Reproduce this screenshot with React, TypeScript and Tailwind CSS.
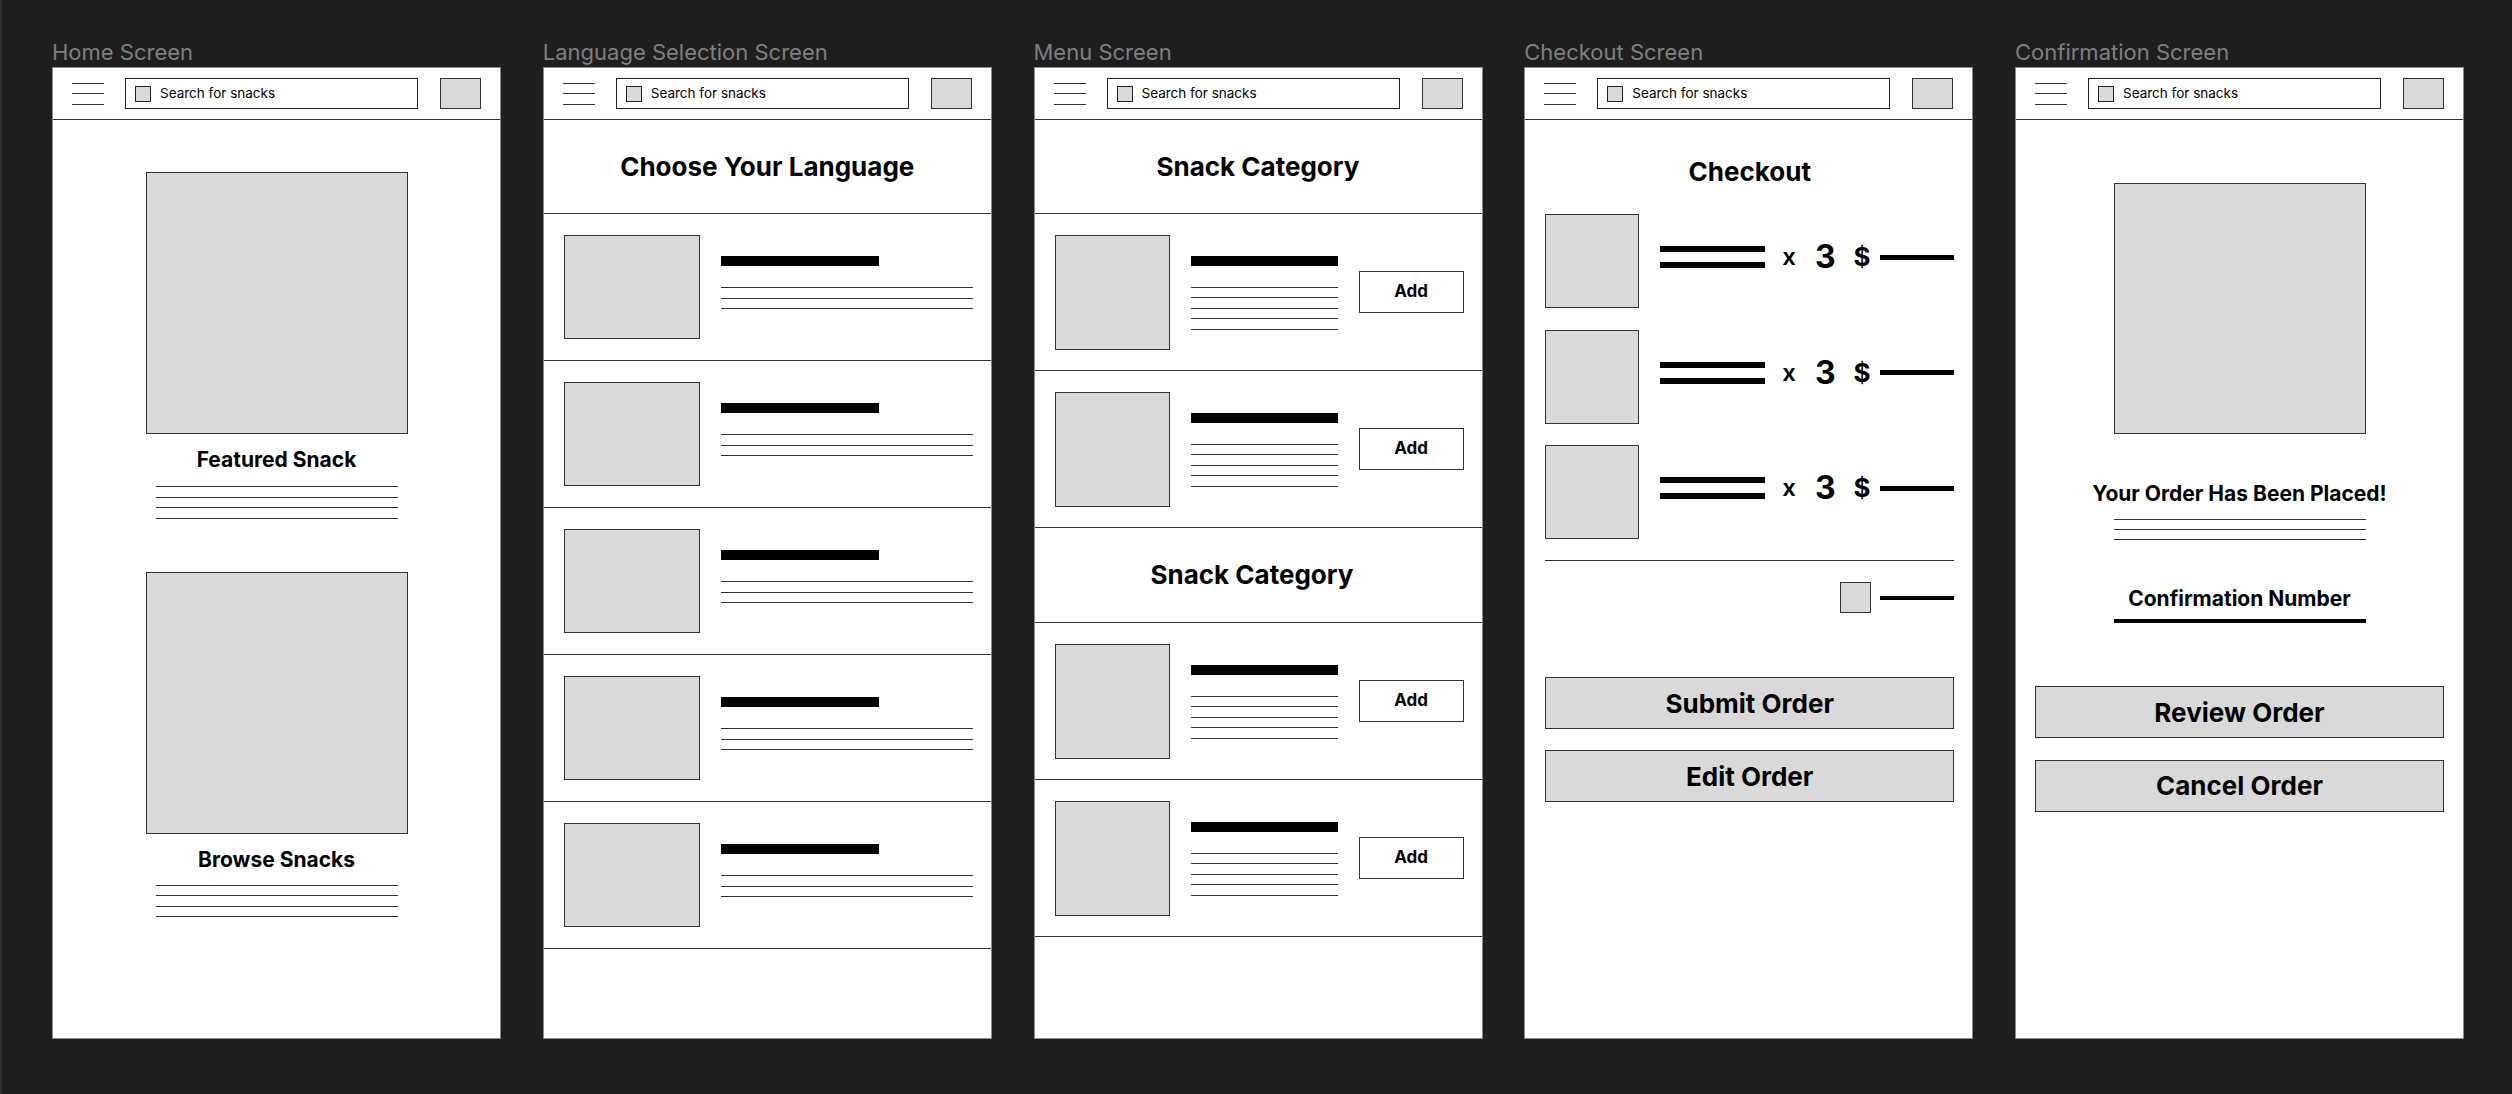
import React from 'react';

const Img: React.FC<{ className?: string }> = ({ className = '' }) => (
  <div className={`bg-[#d9d9d9] border border-[#333] shrink-0 ${className}`} />
);

const Lines: React.FC<{ count: number; className?: string; gap?: string }> = ({ count, className = '', gap = 'gap-[9.5px]' }) => (
  <div className={`flex flex-col ${gap} ${className}`}>
    {Array.from({ length: count }).map((_, i) => (
      <div key={i} className="h-px bg-[#333]" />
    ))}
  </div>
);

const Header: React.FC = () => (
  <div className="h-[52px] shrink-0 border-b border-[#333] flex items-center px-[19px]">
    <div className="w-[32px] flex flex-col gap-[9.5px]">
      <div className="h-px bg-[#333]" />
      <div className="h-px bg-[#333]" />
      <div className="h-px bg-[#333]" />
    </div>
    <div className="ml-[21px] w-[293px] h-[31px] border border-[#222] flex items-center pl-[9px]">
      <div className="w-[16px] h-[16px] bg-[#d9d9d9] border border-[#222]" />
      <span className="ml-[9px] text-[13.5px] leading-none text-black">Search for snacks</span>
    </div>
    <div className="ml-[22px] w-[41px] h-[31px] bg-[#d9d9d9] border border-[#333]" />
  </div>
);

const Screen: React.FC<{ label: string; children: React.ReactNode }> = ({ label, children }) => (
  <div className="flex flex-col shrink-0">
    <div className="h-[26px] mb-[2px] text-[22px] leading-[26px] text-[#808080] whitespace-nowrap">{label}</div>
    <div className="w-[449px] h-[972px] bg-white border border-[#8a8a8a] flex flex-col overflow-hidden">
      <Header />
      {children}
    </div>
  </div>
);

const HomeScreen = () => (
  <Screen label="Home Screen">
    <div className="flex flex-col items-center pt-[52px]">
      <Img className="w-[262px] h-[262px]" />
      <div className="mt-[13px] text-[21px] leading-[26px] font-bold text-black">Featured Snack</div>
      <Lines count={4} className="mt-[13px] w-[242px]" />
      <Img className="mt-[53px] w-[262px] h-[262px]" />
      <div className="mt-[13px] text-[21px] leading-[26px] font-bold text-black">Browse Snacks</div>
      <Lines count={4} className="mt-[12px] w-[242px]" />
    </div>
  </Screen>
);

const LanguageRow = () => (
  <div className="h-[147px] shrink-0 border-b border-[#333] flex items-center pl-[20px] pr-[18px]">
    <Img className="w-[136px] h-[104px]" />
    <div className="ml-[21px] flex-1 h-[104px] pt-[21px] flex flex-col">
      <div className="w-[158px] h-[10px] bg-black" />
      <Lines count={3} className="mt-[21px] w-full" />
    </div>
  </div>
);

const LanguageScreen = () => (
  <Screen label="Language Selection Screen">
    <div className="h-[94px] shrink-0 border-b border-[#333] flex items-center justify-center">
      <h2 className="text-[26px] leading-[32px] font-bold text-black">Choose Your Language</h2>
    </div>
    {[0, 1, 2, 3, 4].map((i) => (
      <LanguageRow key={i} />
    ))}
  </Screen>
);

const MenuRow = () => (
  <div className="h-[157px] shrink-0 border-b border-[#333] flex items-center pl-[20px]">
    <Img className="w-[115px] h-[115px]" />
    <div className="ml-[21px] w-[147px] h-[115px] pt-[21px] flex flex-col">
      <div className="w-full h-[10px] bg-black" />
      <Lines count={5} className="mt-[21px] w-full" />
    </div>
    <button className="ml-[21px] w-[105px] h-[42px] border border-[#333] bg-white text-[17px] font-bold text-black">
      Add
    </button>
  </div>
);

const MenuScreen = () => (
  <Screen label="Menu Screen">
    <div className="h-[94px] shrink-0 border-b border-[#333] flex items-center justify-center">
      <h2 className="text-[26px] leading-[32px] font-bold text-black">Snack Category</h2>
    </div>
    <MenuRow />
    <MenuRow />
    <div className="h-[95px] shrink-0 border-b border-[#333] flex items-center justify-center pr-[12px]">
      <h2 className="text-[26px] leading-[32px] font-bold text-black">Snack Category</h2>
    </div>
    <MenuRow />
    <MenuRow />
  </Screen>
);

const CheckoutItem = () => (
  <div className="flex items-center">
    <Img className="w-[94px] h-[94px]" />
    <div className="ml-[21px] mb-[8px] flex items-center">
      <div className="w-[105px] flex flex-col gap-[10px]">
        <div className="h-[6px] bg-black" />
        <div className="h-[6px] bg-black" />
      </div>
      <span className="ml-[17px] text-[24px] leading-none font-semibold text-black">x</span>
      <span className="ml-[19px] text-[32px] leading-none font-bold text-black">3</span>
      <span className="ml-[18px] text-[26px] leading-none font-bold text-black">$</span>
      <div className="ml-[9px] w-[74px] h-[5px] bg-black" />
    </div>
  </div>
);

const OrderButton: React.FC<{ label: string; className?: string }> = ({ label, className = '' }) => (
  <button className={`w-[409px] h-[52px] bg-[#d9d9d9] border border-[#333] text-[26px] font-bold text-black ${className}`}>
    {label}
  </button>
);

const CheckoutScreen = () => (
  <Screen label="Checkout Screen">
    <div className="flex flex-col pl-[20px] pr-[18px] pt-[36px]">
      <h2 className="text-center text-[26px] leading-[32px] font-bold text-black">Checkout</h2>
      <div className="mt-[26px] flex flex-col gap-[21.5px]">
        <CheckoutItem />
        <CheckoutItem />
        <CheckoutItem />
      </div>
      <div className="mt-[21px] h-px bg-[#333]" />
      <div className="mt-[21px] flex items-center justify-end">
        <Img className="w-[31px] h-[31px]" />
        <div className="ml-[9px] w-[74px] h-[4px] bg-black" />
      </div>
      <OrderButton label="Submit Order" className="mt-[64px]" />
      <OrderButton label="Edit Order" className="mt-[21px]" />
    </div>
  </Screen>
);

const ConfirmationScreen = () => (
  <Screen label="Confirmation Screen">
    <div className="flex flex-col items-center pt-[63px]">
      <Img className="w-[252px] h-[251px]" />
      <div className="mt-[47px] text-[21px] leading-[26px] font-bold text-black">Your Order Has Been Placed!</div>
      <Lines count={3} gap="gap-[9px]" className="mt-[12px] w-[252px]" />
      <div className="mt-[46px] text-[21px] leading-[26px] font-bold text-black">Confirmation Number</div>
      <div className="mt-[7px] w-[252px] h-[4px] bg-black" />
      <OrderButton label="Review Order" className="mt-[63px]" />
      <OrderButton label="Cancel Order" className="mt-[21.5px]" />
    </div>
  </Screen>
);

export default function App() {
  return (
    <div className="w-[2512px] h-[1094px] bg-[#1e1e1e] border-l-2 border-[#2e2e2e] flex gap-[41.75px] pl-[50px] pt-[39px] font-[Inter,sans-serif]">
      <HomeScreen />
      <LanguageScreen />
      <MenuScreen />
      <CheckoutScreen />
      <ConfirmationScreen />
    </div>
  );
}
